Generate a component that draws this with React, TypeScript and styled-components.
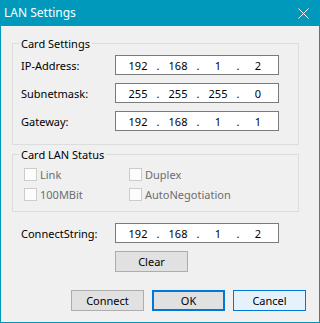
import React from "react";
import styled, { createGlobalStyle } from "styled-components";

const Global = createGlobalStyle`
  html, body { margin: 0; padding: 0; background: #f0f0f0; }
  body { font-family: "Noto Sans", "Open Sans", sans-serif; font-size: 11px; color: #000; }
  * { box-sizing: border-box; }
`;

const Window = styled.div`
  width: 320px;
  height: 323px;
  display: flex;
  flex-direction: column;
  border: 1px solid #0099bc;
  border-top: none;
  background: #f0f0f0;
`;

const TitleBar = styled.div`
  height: 26px;
  margin: 0 -1px;
  background: #0099bc;
  color: #fff;
  display: flex;
  align-items: center;
  justify-content: space-between;
  padding: 0 11px 0 4px;
  font-size: 12px;
`;

const Title = styled.span`
  line-height: 16px;
  margin-top: -1px;
`;

const Client = styled.div`
  flex: 1;
  display: flex;
  flex-direction: column;
  padding: 10px 0 0 11px;
`;

const Group = styled.fieldset<{ $pt: number; $pb: number }>`
  width: 287px;
  margin: 0;
  border: 1px solid #dcdcdc;
  padding: ${(p) => p.$pt}px 0 ${(p) => p.$pb}px 0;
  & + & { margin-top: 2px; }
`;

const Legend = styled.legend`
  margin-left: 6px;
  padding: 0 2px;
  line-height: 15px;
  font-size: 11px;
`;

const FieldRows = styled.div`
  display: flex;
  flex-direction: column;
  gap: 8px;
  padding-left: 8px;
`;

const FieldRow = styled.div`
  display: flex;
  align-items: center;
  height: 20px;
`;

const Label = styled.span`
  width: 94px;
`;

const IpBox = styled.div`
  width: 164px;
  height: 20px;
  background: #fff;
  border: 1px solid #7a7a7a;
  display: flex;
  align-items: center;
  padding-left: 6px;
`;

const Segment = styled.span`
  width: 32px;
  text-align: center;
`;

const Dot = styled.span`
  width: 8px;
  text-align: center;
`;

const CheckGrid = styled.div`
  display: grid;
  grid-template-columns: 105px 1fr;
  grid-auto-rows: 19px;
  row-gap: 1px;
  padding-left: 11px;
`;

const CheckItem = styled.label`
  display: flex;
  align-items: center;
  gap: 3px;
  color: #6d6d6d;
`;

const Box = styled.span`
  width: 13px;
  height: 13px;
  border: 1px solid #cccccc;
  background: #fcfcfc;
  flex: none;
`;

const ConnectRow = styled(FieldRow)`
  margin-top: 11px;
  padding-left: 9px;
`;

const Button = styled.button<{ $variant?: "default" | "focus" | "hover" }>`
  width: 73px;
  height: 21px;
  padding: 0;
  font: inherit;
  font-size: 11px;
  color: #000;
  background: ${(p) => (p.$variant === "hover" ? "#e5f1fb" : "#e1e1e1")};
  border: ${(p) =>
    p.$variant === "focus"
      ? "2px solid #0078d7"
      : p.$variant === "hover"
      ? "1px solid #0078d7"
      : "1px solid #adadad"};
`;

const ClearButton = styled(Button)`
  margin: 8px 0 0 103px;
`;

const ButtonBar = styled.div`
  display: flex;
  justify-content: flex-end;
  gap: 8px;
  margin-top: 18px;
  padding-right: 13px;
`;

const Ip = ({ parts }: { parts: string[] }) => (
  <IpBox>
    {parts.map((p, i) => (
      <React.Fragment key={i}>
        {i > 0 && <Dot>.</Dot>}
        <Segment>{p}</Segment>
      </React.Fragment>
    ))}
  </IpBox>
);

const Check = ({ label }: { label: string }) => (
  <CheckItem>
    <Box />
    {label}
  </CheckItem>
);

export default function App() {
  return (
    <>
      <Global />
      <Window>
        <TitleBar>
          <Title>LAN Settings</Title>
          <svg width="11" height="11" viewBox="0 0 11 11">
            <path d="M0.5 0.5 L10.5 10.5 M10.5 0.5 L0.5 10.5" stroke="#fff" strokeWidth="1" />
          </svg>
        </TitleBar>
        <Client>
          <Group $pt={4} $pb={13}>
            <Legend>Card Settings</Legend>
            <FieldRows>
              <FieldRow>
                <Label>IP-Address:</Label>
                <Ip parts={["192", "168", "1", "2"]} />
              </FieldRow>
              <FieldRow>
                <Label>Subnetmask:</Label>
                <Ip parts={["255", "255", "255", "0"]} />
              </FieldRow>
              <FieldRow>
                <Label>Gateway:</Label>
                <Ip parts={["192", "168", "1", "1"]} />
              </FieldRow>
            </FieldRows>
          </Group>
          <Group $pt={3} $pb={7}>
            <Legend>Card LAN Status</Legend>
            <CheckGrid>
              <Check label="Link" />
              <Check label="Duplex" />
              <Check label="100MBit" />
              <Check label="AutoNegotiation" />
            </CheckGrid>
          </Group>
          <ConnectRow>
            <Label>ConnectString:</Label>
            <Ip parts={["192", "168", "1", "2"]} />
          </ConnectRow>
          <ClearButton>Clear</ClearButton>
          <ButtonBar>
            <Button>Connect</Button>
            <Button $variant="focus">OK</Button>
            <Button $variant="hover">Cancel</Button>
          </ButtonBar>
        </Client>
      </Window>
    </>
  );
}
